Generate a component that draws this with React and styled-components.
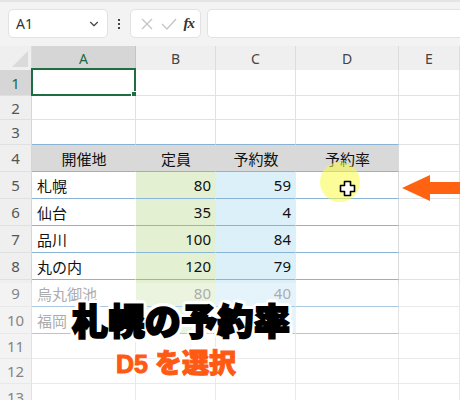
import React from "react";
import styled, { createGlobalStyle } from "styled-components";
import { ChevronDown } from "lucide-react";

const Global = createGlobalStyle`
  html, body { margin: 0; padding: 0; background: #f3f3f3; }
  body { font-family: "Noto Sans", "Noto Sans CJK JP", sans-serif; }
`;

const Page = styled.div`
  position: relative;
  width: 460px;
  height: 400px;
  overflow: hidden;
  background: #f3f3f3;
  border-top: 2px solid #e4e4e4;
  box-sizing: border-box;
`;

const Toolbar = styled.div`
  display: flex;
  align-items: stretch;
  height: 44px;
  padding: 7px 0 8px 8px;
  box-sizing: border-box;
`;

const Box = styled.div`
  background: #fff;
  border: 1px solid #e2e2e2;
  border-radius: 5px;
  box-sizing: border-box;
  display: flex;
  align-items: center;
`;

const NameBox = styled(Box)`
  width: 100px;
  padding: 0 6px 0 7px;
  justify-content: space-between;
  font-size: 14px;
  color: #333;
  font-family: "Noto Sans", sans-serif;
`;

const Dots = styled.div`
  width: 22px;
  display: flex;
  flex-direction: column;
  align-items: center;
  justify-content: center;
  gap: 2px;
  span {
    width: 2px;
    height: 2px;
    background: #444;
  }
`;

const FxBox = styled(Box)`
  width: 71px;
  padding: 0 6px 0 9px;
  justify-content: space-between;
`;

const FxText = styled.span`
  font-family: "Liberation Serif", "DejaVu Serif", serif;
  font-style: italic;
  font-weight: bold;
  font-size: 15px;
  color: #333;
  letter-spacing: -1px;
`;

const FormulaBox = styled(Box)`
  flex: 1;
  margin-left: 6px;
  border-right: none;
  border-radius: 5px 0 0 5px;
`;

const Grid = styled.div`
  display: grid;
  grid-template-columns: 32px 104px 80px 80px 103px 61px;
  grid-template-rows: 24px 26px 24px 25px repeat(7, 27px) 25px 25px 26px;
  background: #fff;
`;

const HeadCell = styled.div`
  background: ${(p) => (p.$sel ? "#d6d6d6" : "#efefef")};
  color: ${(p) => (p.$sel ? "#1d6a3e" : "#444")};
  display: flex;
  align-items: center;
  justify-content: center;
  font-family: "Noto Sans", sans-serif;
  font-size: 14px;
  border-right: 1px solid ${(p) => (p.$sel ? "#c4c4c4" : "#dcdcdc")};
  box-sizing: border-box;
  position: relative;
`;

const RowHead = styled(HeadCell)`
  font-size: 15px;
  color: ${(p) => (p.$sel ? "#1d6a3e" : "#555")};
  border-right: 1px solid #d6d6d6;
  border-bottom: 1px solid #e0e0e0;
`;

const Corner = styled(HeadCell)`
  &::after {
    content: "";
    position: absolute;
    right: 3px;
    bottom: 3px;
    border-style: solid;
    border-width: 0 0 16px 16px;
    border-color: transparent transparent #dadada transparent;
  }
`;

const fills = {
  head: "#d9d9d9",
  green: "#e4f0d2",
  blue: "#dcf0fa",
  none: "#fff",
};

const Cell = styled.div`
  box-sizing: border-box;
  position: relative;
  background: ${(p) => fills[p.$fill || "none"]};
  border-right: 1px solid
    ${(p) => (p.$inTable ? (p.$edge ? "#d9d9d9" : "transparent") : "#e1e1e1")};
  border-bottom: 1px solid ${(p) => (p.$blue ? "#8ab4d6" : "#e1e1e1")};
  display: flex;
  align-items: center;
  justify-content: ${(p) =>
    p.$align === "right" ? "flex-end" : p.$align === "center" ? "center" : "flex-start"};
  padding: 0 4px 0 5px;
  font-family: "Noto Sans CJK JP", "Noto Sans", sans-serif;
  font-size: 15px;
  color: ${(p) => (p.$faded ? "#8c8c8c" : "#111")};
  white-space: nowrap;
`;

const NumText = styled.span`
  font-family: "Noto Sans", "Noto Sans CJK JP", sans-serif;
  font-size: 15px;
`;

const Selection = styled.div`
  position: absolute;
  left: -1px;
  top: -2px;
  right: -1px;
  bottom: -1px;
  border: 2px solid #1f6e43;
  pointer-events: none;
  &::after {
    content: "";
    position: absolute;
    right: -4px;
    bottom: -4px;
    width: 5px;
    height: 5px;
    background: #1f6e43;
    border: 1px solid #fff;
  }
`;

const Fade = styled.div`
  position: absolute;
  left: 0;
  right: 0;
  top: 281px;
  bottom: 0;
  background: rgba(255, 255, 255, 0.28);
`;

const Spot = styled.div`
  position: absolute;
  left: 320px;
  top: 160px;
  width: 40px;
  height: 40px;
  border-radius: 50%;
  background: rgba(250, 250, 70, 0.55);
`;

const Cursor = styled.svg`
  position: absolute;
  left: 339px;
  top: 178px;
`;

const Arrow = styled.svg`
  position: absolute;
  left: 400px;
  top: 170px;
`;

const outline = (w, c) => {
  const s = [];
  for (let i = 0; i < 16; i++) {
    const a = (i / 16) * Math.PI * 2;
    s.push(`${(Math.cos(a) * w).toFixed(2)}px ${(Math.sin(a) * w).toFixed(2)}px 0 ${c}`);
  }
  return s.join(", ");
};

const BigTitle = styled.div`
  position: absolute;
  left: 72px;
  top: 299px;
  font-family: "Noto Sans CJK JP", sans-serif;
  font-weight: 900;
  font-size: 36px;
  line-height: 1;
  color: #000;
  letter-spacing: 0.4px;
  -webkit-text-stroke: 2px #000;
  text-shadow: ${outline(4, "#fff")}, 0 0 6px rgba(255, 255, 255, 0.9);
`;

const SubTitle = styled.div`
  position: absolute;
  left: 116px;
  top: 346px;
  font-family: "Noto Sans CJK JP", sans-serif;
  font-weight: 900;
  font-size: 27px;
  line-height: 1;
  color: #ff5a14;
  -webkit-text-stroke: 1px #ff5a14;
  text-shadow: ${outline(2.5, "#fff")};
  b {
    font-family: "Liberation Sans", "Noto Sans", sans-serif;
    font-weight: 900;
    font-size: 25px;
    margin-right: 7px;
  }
`;

const cols = ["A", "B", "C", "D", "E"];

const data = {
  4: ["開催地", "定員", "予約数", "予約率"],
  5: ["札幌", "80", "59", ""],
  6: ["仙台", "35", "4", ""],
  7: ["品川", "100", "84", ""],
  8: ["丸の内", "120", "79", ""],
  9: ["烏丸御池", "80", "40", ""],
  10: ["福岡", "95", "65", ""],
};

function renderCell(r, c) {
  const key = `${r}-${c}`;
  const inTable = r >= 4 && r <= 10 && c < 4;
  const row = data[r];
  const faded = r >= 9;
  if (!inTable) {
    const blue = r === 3 && c < 4;
    return (
      <Cell key={key} $blue={blue}>
        {r === 1 && c === 0 && <Selection />}
      </Cell>
    );
  }
  const text = row ? row[c] : "";
  if (r === 4) {
    return (
      <Cell key={key} $inTable $edge={c === 3} $blue $fill="head" $align="center">
        {text}
      </Cell>
    );
  }
  const fill = c === 1 ? "green" : c === 2 ? "blue" : "none";
  const isNum = c === 1 || c === 2;
  return (
    <Cell
      key={key}
      $inTable
      $edge={c === 3}
      $blue
      $fill={fill}
      $align={isNum ? "right" : "left"}
      $faded={faded}
    >
      {isNum ? <NumText>{text}</NumText> : text}
    </Cell>
  );
}

export default function App() {
  const rows = Array.from({ length: 13 }, (_, i) => i + 1);
  return (
    <>
      <Global />
      <Page>
        <Toolbar>
          <NameBox>
            <span>A1</span>
            <ChevronDown size={14} color="#444" strokeWidth={2} />
          </NameBox>
          <Dots>
            <span />
            <span />
            <span />
          </Dots>
          <FxBox>
            <svg width="14" height="14" viewBox="0 0 14 14">
              <path d="M2 2 L12 12 M12 2 L2 12" stroke="#c4c4c4" strokeWidth="1.3" fill="none" />
            </svg>
            <svg width="16" height="14" viewBox="0 0 16 14">
              <path d="M1 7 L6 12 L15 2" stroke="#c4c4c4" strokeWidth="1.3" fill="none" />
            </svg>
            <FxText>fx</FxText>
          </FxBox>
          <FormulaBox />
        </Toolbar>
        <Grid>
          <Corner />
          {cols.map((l, i) => (
            <HeadCell key={l} $sel={i === 0}>
              {l}
            </HeadCell>
          ))}
          {rows.map((r) => (
            <React.Fragment key={r}>
              <RowHead $sel={r === 1}>{r}</RowHead>
              {[0, 1, 2, 3, 4].map((c) => renderCell(r, c))}
            </React.Fragment>
          ))}
        </Grid>
        <Fade />
        <Spot />
        <Cursor width="17" height="17" viewBox="0 0 17 17">
          <path
            d="M5.5 1.5 H11.5 V5.5 H15.5 V11.5 H11.5 V15.5 H5.5 V11.5 H1.5 V5.5 H5.5 Z"
            fill="#fff"
            stroke="#000"
            strokeWidth="1.6"
            strokeLinejoin="round"
          />
        </Cursor>
        <Arrow width="60" height="32" viewBox="0 0 60 32">
          <polygon points="2,16 30,3 30,10 60,10 60,22 30,22 30,29" fill="#ff6312" />
        </Arrow>
        <BigTitle>札幌の予約率</BigTitle>
        <SubTitle>
          <b>D5</b>を選択
        </SubTitle>
      </Page>
    </>
  );
}
